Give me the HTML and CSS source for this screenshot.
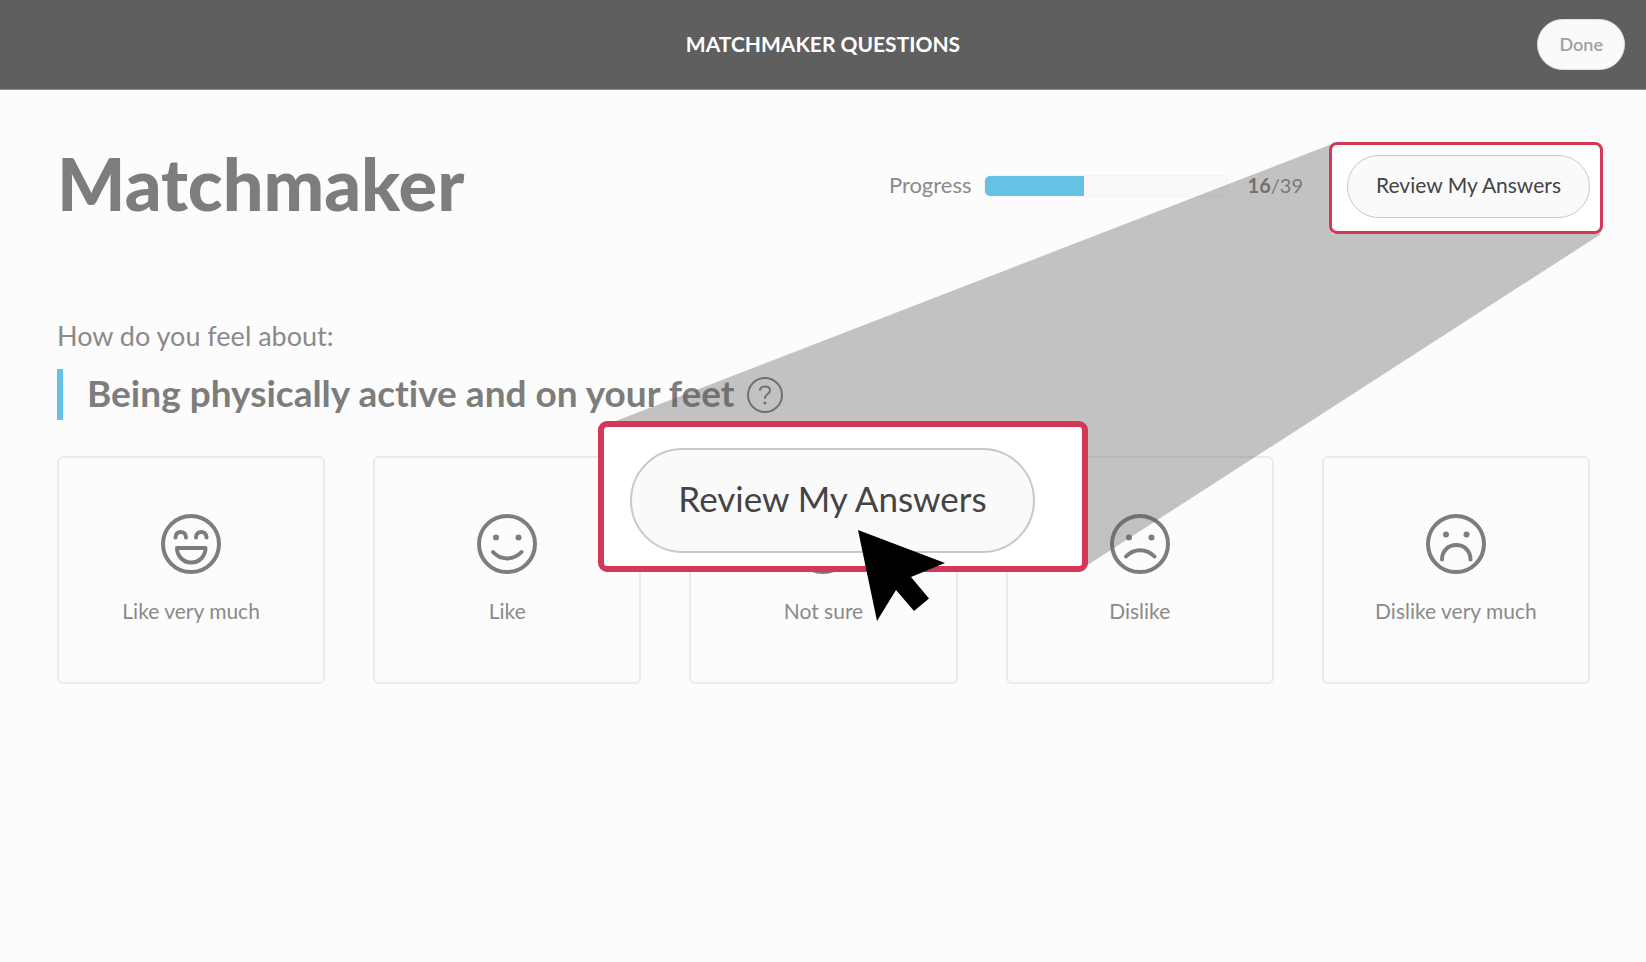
FILE: index.html
```
<!DOCTYPE html>
<html lang="en">
<head>
    <meta charset="UTF-8">
    <meta name="viewport" content="width=device-width, initial-scale=1.0">
    <title>Matchmaker Questions</title>
    <link rel="stylesheet" href="styles.css">
</head>
<body>
    <header class="header">
        <div class="header-title">MATCHMAKER QUESTIONS</div>
        <button type="button" class="done-button">Done</button>
    </header>
    <main class="container">
        <div class="title-row">
            <h1>Matchmaker</h1>
            <div class="progress-group">
                <label for="progress">Progress</label>
                <progress id="progress" max="39" value="16"></progress>
                <span class="progress-count"><strong>16</strong>/39</span>
            </div>
            <div class="review">
                <button type="button" class="review-button">Review My Answers</button>
            </div>
        </div>

        <p class="question-intro">How do you feel about:</p>
        <div class="question">
            <h2>Being physically active and on your feet</h2>
            <button type="button" class="help-button" aria-label="Help">
                <svg viewBox="0 0 36 36" width="36" height="36" fill="none" stroke="currentColor" stroke-width="2" stroke-linecap="round">
                    <circle cx="18" cy="18" r="17"/>
                    <path d="M13 13C13.500 10.500 15 9.500 18 9.500s5 1.500 5 4c0 3.500-5 3.500-5 7.500"/>
                    <circle cx="18" cy="26" r="1.500" fill="currentColor" stroke="none"/>
                </svg>
            </button>
        </div>

        <div class="answers">
            <button type="button" class="answer">
                <svg class="face" viewBox="0 0 60 60">
                    <circle cx="30" cy="30" r="28"/>
                    <path d="M14.500 23.500c0-7.500 10.500-7.500 10.500 0M35 23.500c0-7.500 10.500-7.500 10.500 0"/>
                    <path d="M16 34h28.500c0 8-6 14.500-14.250 14.500S16 42 16 34z"/>
                </svg>
                <span>Like very much</span>
            </button>
            <button type="button" class="answer">
                <svg class="face" viewBox="0 0 60 60">
                    <circle cx="30" cy="30" r="28"/>
                    <circle class="eye" cx="19" cy="23.500" r="3"/>
                    <circle class="eye" cx="41.500" cy="23.500" r="3"/>
                    <path d="M16 38c7.500 8.500 20.500 8.500 28.500 0"/>
                </svg>
                <span>Like</span>
            </button>
            <button type="button" class="answer">
                <svg class="face" viewBox="0 0 60 60">
                    <circle cx="30" cy="30" r="28"/>
                    <circle class="eye" cx="19" cy="23.500" r="3"/>
                    <circle class="eye" cx="41.500" cy="23.500" r="3"/>
                    <path d="M17 40h26"/>
                </svg>
                <span>Not sure</span>
            </button>
            <button type="button" class="answer">
                <svg class="face" viewBox="0 0 60 60">
                    <circle cx="30" cy="30" r="28"/>
                    <circle class="eye" cx="19" cy="23.500" r="3"/>
                    <circle class="eye" cx="41.500" cy="23.500" r="3"/>
                    <path d="M16 42.500c7.500-8.500 20.500-8.500 28.500 0"/>
                </svg>
                <span>Dislike</span>
            </button>
            <button type="button" class="answer">
                <svg class="face" viewBox="0 0 60 60">
                    <circle cx="30" cy="30" r="28"/>
                    <circle class="eye" cx="20" cy="20.500" r="3"/>
                    <circle class="eye" cx="40.500" cy="20.500" r="3"/>
                    <path d="M16 45.500c0-8.500 6-14.500 14.250-14.500s14.250 6 14.250 14.500"/>
                </svg>
                <span>Dislike very much</span>
            </button>
        </div>
    </main>

    <!-- Zoomed view of the review button -->
    <svg class="beam" viewBox="0 0 1646 962" preserveAspectRatio="none">
        <polygon points="1332,144 608,424 608,566 1086,566 1601,234 1332,234"/>
    </svg>
    <div class="highlight"></div>
    <div class="callout">
        <button type="button" class="callout-button">Review My Answers</button>
        <svg class="cursor" viewBox="0 0 88 92" width="88" height="92">
            <polygon points="0,0 87,33 53,47 71,68.500 56,81 38,60 19,91"/>
        </svg>
    </div>
</body>
</html>
```
FILE: styles.css
```
* {
    box-sizing: border-box;
}
body {
    margin: 0;
    position: relative;
    min-height: 100vh;
    font-family: Lato, "Open Sans", sans-serif;
    font-variant-ligatures: none;
    color: #7d7d7d;
    background-color: #fcfcfc;
}
button {
    font-family: inherit;
    cursor: pointer;
}
.header {
    display: grid;
    grid-template-columns: 1fr auto 1fr;
    align-items: center;
    height: 90px;
    padding: 0 21px;
    background-color: #5f5f5f;
    border-bottom: 1px solid #8c8c8c;
}
.header-title {
    grid-column: 2;
    padding-bottom: 2px;
    font-size: 21px;
    font-weight: 700;
    color: #fff;
}
.done-button {
    justify-self: end;
    padding: 0 21px 2px;
    height: 51px;
    border: 1px solid #e0e0e0;
    border-radius: 26px;
    font-size: 18px;
    font-weight: 600;
    color: #a0a0a0;
    background-color: #fafafa;
}
.container {
    padding: 59px 56px 59px 57px;
}
.title-row {
    display: flex;
    align-items: center;
    height: 74px;
}
h1 {
    margin: 0;
    padding-bottom: 6px;
    font-size: 72px;
    font-weight: 900;
    line-height: 74px;
}
.progress-group {
    display: flex;
    align-items: center;
    margin-left: auto;
    font-size: 22px;
    line-height: 26px;
    color: #8a8a8a;
}
.progress-group label,
.progress-count {
    padding-bottom: 3px;
}
progress {
    appearance: none;
    width: 244px;
    height: 22px;
    margin: 0 20px 0 12px;
    border: none;
    border-radius: 5px;
    overflow: hidden;
}
progress::-webkit-progress-bar {
    background-color: #f9f9f9;
    border: 1px solid #f3f3f3;
    border-radius: 5px;
}
progress::-webkit-progress-value {
    background-color: #65c2e4;
    border-radius: 5px 0 0 5px;
}
.progress-count {
    font-size: 20px;
}
.progress-count strong {
    color: #7d7d7d;
}
.review {
    margin-left: 44px;
}
.review-button,
.callout-button {
    color: #444;
    background-color: #fafafa;
}
.review-button {
    position: relative;
    z-index: 3; /* Stays above the highlight */
    width: 243px;
    height: 63px;
    padding: 0 0 4px;
    border: 1px solid #c8c8c8;
    border-radius: 32px;
    font-size: 21px;
}
.question-intro {
    margin: 97px 0 17px;
    font-size: 27px;
    line-height: 32px;
    color: #8a8a8a;
}
.question {
    display: flex;
    align-items: center;
    gap: 12px;
    height: 51px;
    padding-left: 24px;
    border-left: 6px solid #65c2e4;
}
h2 {
    margin: 0;
    padding-bottom: 4px;
    font-size: 37px;
    font-weight: 700;
}
.help-button {
    display: flex;
    padding: 0;
    border: none;
    background: none;
    color: #7d7d7d;
}
.answers {
    display: grid;
    grid-template-columns: repeat(5, 1fr);
    gap: 48px;
    margin-top: 36px;
}
.answer {
    display: flex;
    flex-direction: column;
    align-items: center;
    justify-content: center;
    gap: 23px;
    height: 228px;
    padding: 0 0 2px;
    border: 2px solid #ebebeb;
    border-radius: 6px;
    font-size: 21px;
    line-height: 28px;
    color: #8a8a8a;
    background-color: #fcfcfc;
}
.face {
    width: 60px;
    height: 60px;
    fill: none;
    stroke: #7d7d7d;
    stroke-width: 4;
    stroke-linecap: round;
    stroke-linejoin: round;
}
.face .eye {
    fill: #7d7d7d;
    stroke: none;
}
.beam {
    position: absolute;
    top: 0;
    left: 0;
    width: 100%;
    height: 962px;
    fill: rgba(91, 91, 91, 0.36);
    pointer-events: none;
}
.highlight {
    position: absolute;
    top: 142px;
    right: 43px;
    z-index: 2;
    width: 274px;
    height: 92px;
    border: 3px solid #d33859;
    border-radius: 8px;
    background-color: #fff;
}
.callout {
    position: absolute;
    top: 421px;
    left: 598px;
    z-index: 4;
    width: 490px;
    height: 151px;
    padding: 21px 26px;
    border: 6px solid #d33859;
    border-radius: 9px;
    background-color: #fff;
}
.callout-button {
    width: 405px;
    height: 105px;
    padding: 0 0 6px;
    border: 2px solid #c8c8c8;
    border-radius: 53px;
    font-size: 35px;
}
.cursor {
    position: absolute;
    top: 103px;
    left: 254px;
}
```
